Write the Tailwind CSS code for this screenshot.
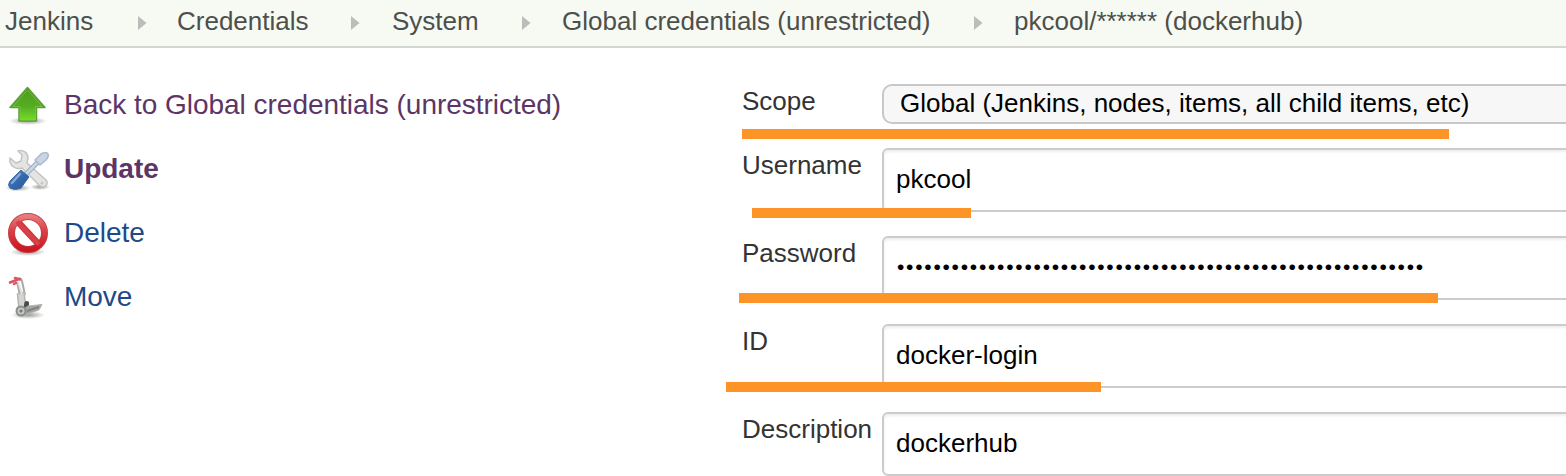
<!DOCTYPE html>
<html lang="en">
<head>
<meta charset="utf-8">
<title>Jenkins</title>
<script src="https://cdn.jsdelivr.net/npm/@tailwindcss/browser@4"></script>
</head>
<body class="h-[476px] overflow-hidden bg-white font-['Liberation_Sans',Arial,sans-serif] text-[26px] leading-[30px] text-[#333333]">
<nav class="flex h-12 items-start whitespace-nowrap border-b-2 border-[#d3d7cf] bg-[#f6faf2] pl-[5px] pt-1.5 text-[#4d4f4c]">
  <span class="w-[133px] shrink-0">Jenkins</span>
  <svg class="mt-[9px] mr-[30px] h-4 w-[9px] shrink-0" viewBox="0 0 9 16"><path d="M0 1L8.500 8L0 15z" fill="#bcbdbb"/></svg>
  <span class="w-[174px] shrink-0">Credentials</span>
  <svg class="mt-[9px] mr-[32px] h-4 w-[9px] shrink-0" viewBox="0 0 9 16"><path d="M0 1L8.500 8L0 15z" fill="#bcbdbb"/></svg>
  <span class="w-[130px] shrink-0">System</span>
  <svg class="mt-[9px] mr-[31px] h-4 w-[9px] shrink-0" viewBox="0 0 9 16"><path d="M0 1L8.500 8L0 15z" fill="#bcbdbb"/></svg>
  <span class="w-[412px] shrink-0">Global credentials (unrestricted)</span>
  <svg class="mt-[9px] mr-[31px] h-4 w-[9px] shrink-0" viewBox="0 0 9 16"><path d="M0 1L8.500 8L0 15z" fill="#bcbdbb"/></svg>
  <span>pkcool/****** (dockerhub)</span>
</nav>
<div class="relative flex">
  <aside class="flex w-[742px] shrink-0 flex-col pl-1 pt-[33px] text-[28px] leading-8 tracking-[-0.02px] text-[#204a87]">
    <a class="flex h-16 items-start gap-3 text-[#5c3566]">
      <svg class="h-12 w-12 shrink-0 blur-[0.5px]" viewBox="0 0 48 48">
        <defs>
          <linearGradient id="green" x1="0" y1="0" x2="0" y2="1"><stop offset="0" stop-color="#4e9a20"/><stop offset=".55" stop-color="#55ac22"/><stop offset="1" stop-color="#78dc28"/></linearGradient>
          <radialGradient id="shade"><stop offset="0" stop-color="#555" stop-opacity=".6"/><stop offset="1" stop-color="#555" stop-opacity="0"/></radialGradient>
        </defs>
        <ellipse cx="24" cy="40" rx="19" ry="4" fill="url(#shade)"/>
        <path d="M23.500 6.500L41 26.500H32.500V40H15V26.500H6z" fill="url(#green)" stroke="#59a034" stroke-width="1.500" stroke-linejoin="round"/>
        <path d="M23.500 9L38 25.500H31.500V39H16V25.500H9z" fill="none" stroke="#8dcf58" stroke-opacity=".5"/>
      </svg>
      <span class="mt-2">Back to Global credentials (unrestricted)</span>
    </a>
    <a class="flex h-16 items-start gap-3 font-bold text-[#5c3566]">
      <svg class="h-12 w-12 shrink-0 blur-[0.5px]" viewBox="0 0 48 48">
        <defs><linearGradient id="blue" x1="0" y1="0" x2="1" y2="1"><stop offset="0" stop-color="#6b9bd2"/><stop offset=".5" stop-color="#3669ad"/><stop offset="1" stop-color="#2a5595"/></linearGradient></defs>
        <ellipse cx="14" cy="43" rx="13" ry="3.500" fill="url(#shade)"/>
        <ellipse cx="36" cy="42" rx="10" ry="3" fill="url(#shade)"/>
        <path d="M14 6C19 4 24 8 24 13L23 18L42 35C45 39 41 44 36 41L18 23C12 25 5 21 6 13L12 18L17 16L18 10z" fill="#e4e5e3" stroke="#c2c4c0" stroke-width="1.500" stroke-linejoin="round"/>
        <circle cx="38" cy="38" r="1.500" fill="#c5c7c3"/>
        <path d="M34 17L21 30" stroke="#9db0c4" stroke-width="5"/>
        <path d="M34 17L21 30" stroke="#cbd7e3" stroke-width="2.500"/>
        <path d="M31 15L37 9Q42 6 44 9Q45 12 42 15L36 20Z" fill="#c8d5e4" stroke="#a9bace" stroke-width="1.500" stroke-linejoin="round"/>
        <path d="M17 25L25 32L22 36L17 43Q11 46 6 43Q3 40 6 36L13 29z" fill="url(#blue)" stroke="#3768a6" stroke-linejoin="round"/>
        <path d="M16 29L8 38" stroke="#85acdb" stroke-width="2" stroke-linecap="round"/>
      </svg>
      <span class="mt-2">Update</span>
    </a>
    <a class="flex h-16 items-start gap-3">
      <svg class="h-12 w-12 shrink-0 blur-[0.5px]" viewBox="0 0 48 48">
        <defs><linearGradient id="red" x1="0" y1="0" x2="0" y2="1"><stop offset="0" stop-color="#e57b7d"/><stop offset=".4" stop-color="#d7444a"/><stop offset="1" stop-color="#cb1720"/></linearGradient></defs>
        <ellipse cx="24" cy="43" rx="18" ry="4" fill="url(#shade)"/>
        <circle cx="24" cy="24" r="16.500" fill="#fff" stroke="#c33b3f" stroke-width="7"/>
        <path d="M14 13L34.500 35" stroke="#c9343a" stroke-width="6.500"/>
        <circle cx="24" cy="24" r="16.500" fill="none" stroke="url(#red)" stroke-width="5.500"/>
        <path d="M13 12.500L35 35.500" stroke="#d94147" stroke-width="4.500"/>
      </svg>
      <span class="mt-2">Delete</span>
    </a>
    <a class="flex h-16 items-start gap-3">
      <svg class="h-12 w-12 shrink-0 blur-[0.5px]" viewBox="0 0 48 48">
        <ellipse cx="24" cy="42" rx="17" ry="4" fill="url(#shade)"/>
        <path d="M13 7Q16 3 18 8L21 22M13 9L16 22" fill="none" stroke="#a8aaa7" stroke-width="2"/>
        <path d="M13.500 21L20 19L22 37L15 37z" fill="#d3d5d2" stroke="#b4b6b2" stroke-width="1.500"/>
        <path d="M14 9L18 21" stroke="#e1e2e0" stroke-width="2"/>
        <path d="M6 9.500L14 6.500M10 11L12 10M11 5L16 6.500" stroke="#dc5560" stroke-width="2.500" stroke-linecap="round"/>
        <path d="M20 33Q20 26 25 29V36H20z" fill="#4b4d4a"/>
        <path d="M24 33L38 31.500L35 37L21 42L19 37z" fill="#a3a5a1" stroke="#b4b6b2"/>
        <path d="M23 38L35 34" stroke="#81847e" stroke-width="2"/>
        <circle cx="17" cy="38" r="4.500" fill="#c4c6c2" stroke="#8b8e88" stroke-width="2"/>
        <circle cx="17" cy="38" r="1.500" fill="#777"/>
      </svg>
      <span class="mt-2">Move</span>
    </a>
  </aside>
  <form class="flex w-[840px] shrink-0 flex-col pt-9">
    <div class="flex h-16">
      <label class="mt-0.5 w-[140px] shrink-0">Scope</label>
      <div class="h-10 flex-1 whitespace-nowrap rounded-[10px] border-2 border-[#c8c8c8] bg-[#f7f7f7] pl-4 pt-0.5 text-black">Global (Jenkins, nodes, items, all child items, etc)</div>
    </div>
    <div class="flex h-[88px]">
      <label class="mt-0.5 w-[140px] shrink-0">Username</label>
      <div class="h-16 flex-1 rounded-md border-2 border-[#cccccc] pl-3 pt-3.5 text-black shadow-[inset_0_2px_3px_#00000013]">pkcool</div>
    </div>
    <div class="flex h-[88px]">
      <label class="mt-0.5 w-[140px] shrink-0">Password</label>
      <div class="h-16 flex-1 rounded-md border-2 border-[#cccccc] pl-[13px] pt-3.5 text-[21px] tracking-[1.75px] text-black shadow-[inset_0_2px_3px_#00000013]">••••••••••••••••••••••••••••••••••••••••••••••••••••••••••</div>
    </div>
    <div class="flex h-[88px]">
      <label class="mt-0.5 w-[140px] shrink-0">ID</label>
      <div class="h-16 flex-1 rounded-md border-2 border-[#cccccc] pl-3 pt-3.5 text-black shadow-[inset_0_2px_3px_#00000013]">docker-login</div>
    </div>
    <div class="flex h-16">
      <label class="mt-0.5 w-[140px] shrink-0">Description</label>
      <div class="h-16 flex-1 rounded-md border-2 border-[#cccccc] pl-3 pt-3.5 text-black shadow-[inset_0_2px_3px_#00000013]">dockerhub</div>
    </div>
  </form>
  <!-- Highlighter strokes drawn over the form -->
  <div class="absolute left-[742px] top-[81px] h-[10px] w-[707px] bg-[#fd9427]"></div>
  <div class="absolute left-[752px] top-[160px] h-[10px] w-[219px] bg-[#fd9427]"></div>
  <div class="absolute left-[739px] top-[245px] h-[10px] w-[699px] bg-[#fd9427]"></div>
  <div class="absolute left-[726px] top-[334px] h-[10px] w-[375px] bg-[#fd9427]"></div>
</div>
</body>
</html>
